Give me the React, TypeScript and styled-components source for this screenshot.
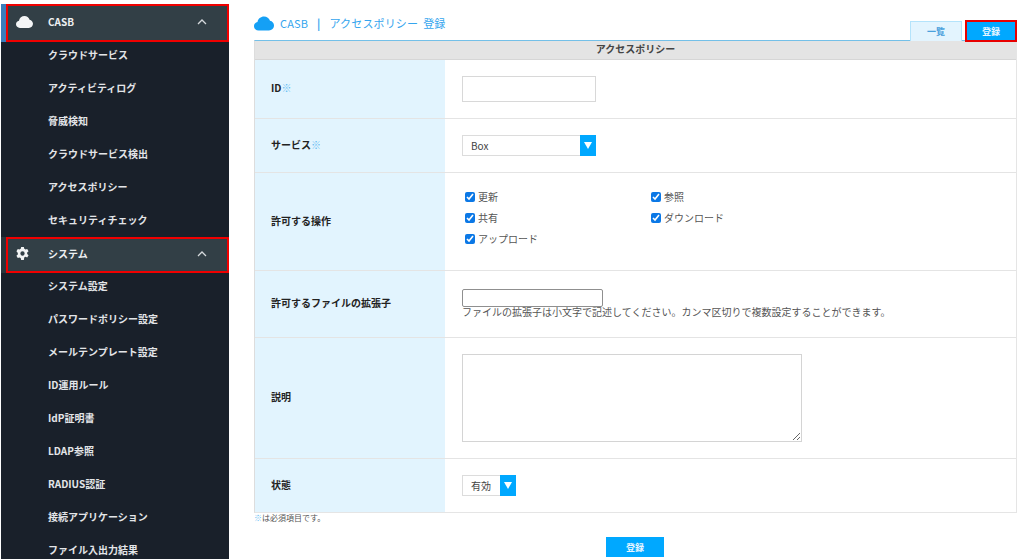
import styled, { createGlobalStyle } from 'styled-components'

const GlobalStyle = createGlobalStyle`
  html, body { margin: 0; padding: 0; background: #fff; height: 559px; overflow: hidden; }
  body { font-family: "Noto Sans CJK JP", "Noto Sans", sans-serif; font-size: 10px; color: #444; }
`

const Page = styled.div`
  display: flex;
  width: 1024px;
  height: 559px;
  overflow: hidden;
`

const Sidebar = styled.nav`
  width: 228px;
  margin: 4px 0 0 1px;
  flex-shrink: 0;
  background: #19202a;
  overflow: hidden;
`

// the red outline sits over the top few px of the next menu row
const MenuHeader = styled.div<{ $first?: boolean }>`
  display: flex;
  align-items: center;
  position: relative;
  z-index: 1;
  height: ${({ $first }) => ($first ? '38px' : '36px')};
  box-sizing: border-box;
  margin: ${({ $first }) => ($first ? '0 0 -3.500px 5px' : '0.500px 0 -3px 5px')};
  padding: 0 0 3px 8px;
  background: #323f46;
  border: 2px solid #f00000;
  color: #eef0f2;
  font-size: 10px;
  font-weight: 700;
  box-shadow: -5px 0 0 ${({ $first }) => ($first ? '#3a7dbb' : '#2a353c')};
`

const MenuIcon = styled.span`
  width: 32px;
  display: flex;
  align-items: center;
`

const MenuTitle = styled.span`
  flex: 1;
`

const Chevron = styled.svg`
  width: 10px;
  height: 6px;
  margin-right: 20px;
`

const MenuItem = styled.div`
  height: 33px;
  box-sizing: border-box;
  display: flex;
  align-items: center;
  padding: 0 0 2px 47px;
  color: #e3e5e8;
  font-size: 10px;
  font-weight: 700;
`

const Main = styled.main`
  flex: 1;
  padding: 0 7px 0 25px;
  min-width: 0;
`

const TopBar = styled.div`
  height: 41px;
  display: flex;
  align-items: flex-start;
  justify-content: space-between;
`

const PageTitle = styled.h1`
  margin: 14px 0 0;
  display: flex;
  align-items: center;
  gap: 6px;
  font-size: 11px;
  line-height: 18px;
  font-weight: 400;
  letter-spacing: 0.15px;
  color: #35a5ee;
`

const TitleBar = styled.span`
  margin: 0 9px;
  font-weight: 700;
`

const TitleAction = styled.span`
  margin-left: 5px;
`

const TopActions = styled.div`
  display: flex;
  align-items: flex-start;
  gap: 3px;
  margin-top: 20px;
  position: relative;
  z-index: 1;
`

const ListButton = styled.button`
  width: 52px;
  height: 20px;
  margin-top: 1px;
  box-sizing: border-box;
  border: 1.500px solid #b4e3fb;
  border-bottom: none;
  background: #e3f4fe;
  color: #4aa0dc;
  font: 700 9px "Noto Sans CJK JP", sans-serif;
  padding: 0;
`

const PrimaryButton = styled.button<{ $outlined?: boolean }>`
  width: ${({ $outlined }) => ($outlined ? '52px' : '58px')};
  height: ${({ $outlined }) => ($outlined ? '22px' : '20px')};
  box-sizing: border-box;
  border: ${({ $outlined }) => ($outlined ? '2px solid #e80000' : 'none')};
  background: #00a8ff;
  color: #e8f6ff;
  font: 700 9px "Noto Sans CJK JP", sans-serif;
  padding: 0;
`

const Form = styled.section`
  border-top: 1px solid #74c0e8;
  border-left: 1px solid #ddd;
  border-right: 1px solid #e5e5e5;
  border-bottom: 1px solid #e5e5e5;
  margin-top: -1px;
`

const FormTitle = styled.div`
  height: 19px;
  background: #e4e4e4;
  border-bottom: 1px solid #d6d6d6;
  box-sizing: border-box;
  text-align: center;
  font-size: 10px;
  line-height: 16px;
  font-weight: 700;
  color: #444;
`

const Row = styled.div<{ $height: number }>`
  display: flex;
  height: ${({ $height }) => $height}px;
  box-sizing: border-box;
  border-bottom: 1px solid #e4e4e4;

  &:last-child {
    border-bottom: none;
  }
`

const Label = styled.div`
  width: 190px;
  flex-shrink: 0;
  background: #e2f4fe;
  display: flex;
  align-items: center;
  padding: 0 0 3px 16px;
  box-sizing: border-box;
  font-size: 10px;
  font-weight: 700;
  color: #222;
`

const Required = styled.span`
  color: #62bcf3;
  font-weight: 700;
`

const Field = styled.div`
  flex: 1;
  padding-left: 17px;
  display: flex;
  flex-direction: column;
  justify-content: center;
  align-items: flex-start;
`

const TextBox = styled.input`
  width: 134px;
  height: 26px;
  box-sizing: border-box;
  border: 1px solid #d8d8d8;
  background: #fff;
  padding: 0;
  outline: none;
`

const SelectBox = styled.div<{ $width: number }>`
  width: ${({ $width }) => $width}px;
  height: 21px;
  box-sizing: border-box;
  border: 1px solid #dcdcdc;
  display: flex;
  align-items: center;
  justify-content: space-between;
  padding-left: 8px;
  font-size: 10px;
  color: #444;
`

const SelectArrow = styled.span`
  width: 16px;
  height: 21px;
  margin: 0 -1px 0 0;
  background: #00a8ff;
  display: flex;
  align-items: center;
  justify-content: center;
`

const CheckGrid = styled.div`
  display: grid;
  grid-template-columns: 186px 186px;
  grid-auto-rows: 21px;
  margin: -8px 0 0 3px;
`

const CheckItem = styled.label`
  display: flex;
  align-items: center;
  gap: 3px;
  font-size: 10px;
  color: #555;
`

const CheckBox = styled.input`
  width: 10px;
  height: 10px;
  margin: 0;
  accent-color: #0b78e6;
`

const ExtensionInput = styled.input`
  width: 141px;
  height: 18px;
  box-sizing: border-box;
  border: 1px solid #8f8f8f;
  border-radius: 2px;
  padding: 0;
  background: #fff;
  outline: none;
`

const Hint = styled.div`
  font-size: 10px;
  line-height: 14px;
  margin-top: -2px;
  color: #555;
`

const DescriptionArea = styled.textarea`
  width: 340px;
  height: 88px;
  box-sizing: border-box;
  border: 1px solid #d4d4d4;
  padding: 0;
  outline: none;
  font: inherit;
`

const Note = styled.div`
  font-size: 8px;
  line-height: 12px;
  margin-top: -1px;
  color: #555;
`

const Footer = styled.div`
  display: flex;
  justify-content: center;
  margin-top: 13px;
  padding-right: 1px;
`

const sections = {
  casb: ['クラウドサービス', 'アクティビティログ', '脅威検知', 'クラウドサービス検出', 'アクセスポリシー', 'セキュリティチェック'],
  system: [
    'システム設定',
    'パスワードポリシー設定',
    'メールテンプレート設定',
    'ID運用ルール',
    'IdP証明書',
    'LDAP参照',
    'RADIUS認証',
    '接続アプリケーション',
    'ファイル入出力結果',
  ],
}

const operations = ['更新', '参照', '共有', 'ダウンロード', 'アップロード']

function CloudIcon({ color, width, height }: { color: string; width: number; height: number }) {
  return (
    <svg width={width} height={height} viewBox="0 0 20 14">
      <path
        fill={color}
        d="M4.600 14C2 14 0 12.100 0 9.700 0 7.600 1.400 5.900 3.500 5.500 4 2.300 6.800 0 10 0c2.800 0 5.200 1.700 6 4.300 2.300.4 4 2.400 4 4.800 0 2.700-2.200 4.900-5 4.900H4.600z"
      />
    </svg>
  )
}

function GearIcon() {
  return (
    <svg width="13" height="13" viewBox="0 0 24 24">
      <path
        fill="#f2f3f4"
        fillRule="evenodd"
        d="M9.500 0h5l.7 3.400c.8.300 1.500.7 2.200 1.200l3.300-1.100 2.500 4.300-2.600 2.300c.1.900.1 1.700 0 2.600l2.600 2.300-2.500 4.300-3.300-1.100c-.7.500-1.400.9-2.200 1.200L14.500 24h-5l-.7-3.400c-.8-.3-1.500-.7-2.200-1.200l-3.300 1.100-2.500-4.300 2.600-2.300c-.1-.9-.1-1.700 0-2.600L.8 7.800l2.500-4.300 3.300 1.100c.7-.5 1.400-.9 2.200-1.200L9.500 0zM12 8a4 4 0 1 0 0 8 4 4 0 0 0 0-8z"
      />
    </svg>
  )
}

function UpChevron() {
  return (
    <Chevron viewBox="0 0 10 6">
      <path d="M1 5l4-4 4 4" fill="none" stroke="#d5d9dc" strokeWidth="1.300" />
    </Chevron>
  )
}

function Arrow() {
  return (
    <svg width="8" height="7" viewBox="0 0 8 7">
      <path d="M0 0h8L4 7z" fill="#fff" />
    </svg>
  )
}

export default function App() {
  return (
    <Page>
      <GlobalStyle />
      <Sidebar>
        <MenuHeader $first>
          <MenuIcon>
            <CloudIcon color="#f4f5f6" width={17} height={12} />
          </MenuIcon>
          <MenuTitle>CASB</MenuTitle>
          <UpChevron />
        </MenuHeader>
        {sections.casb.map((name) => (
          <MenuItem key={name}>{name}</MenuItem>
        ))}
        <MenuHeader>
          <MenuIcon>
            <GearIcon />
          </MenuIcon>
          <MenuTitle>システム</MenuTitle>
          <UpChevron />
        </MenuHeader>
        {sections.system.map((name) => (
          <MenuItem key={name}>{name}</MenuItem>
        ))}
      </Sidebar>
      <Main>
        <TopBar>
          <PageTitle>
            <CloudIcon color="#14a0f5" width={20} height={15} />
            <span>
              CASB<TitleBar>|</TitleBar>アクセスポリシー<TitleAction>登録</TitleAction>
            </span>
          </PageTitle>
          <TopActions>
            <ListButton>一覧</ListButton>
            <PrimaryButton $outlined>登録</PrimaryButton>
          </TopActions>
        </TopBar>
        <Form>
          <FormTitle>アクセスポリシー</FormTitle>
          <Row $height={59}>
            <Label>
              ID<Required>※</Required>
            </Label>
            <Field>
              <TextBox />
            </Field>
          </Row>
          <Row $height={54}>
            <Label>
              サービス<Required>※</Required>
            </Label>
            <Field>
              <SelectBox $width={134}>
                Box
                <SelectArrow>
                  <Arrow />
                </SelectArrow>
              </SelectBox>
            </Field>
          </Row>
          <Row $height={98}>
            <Label>許可する操作</Label>
            <Field>
              <CheckGrid>
                {operations.map((op) => (
                  <CheckItem key={op}>
                    <CheckBox type="checkbox" defaultChecked />
                    {op}
                  </CheckItem>
                ))}
              </CheckGrid>
            </Field>
          </Row>
          <Row $height={67}>
            <Label>許可するファイルの拡張子</Label>
            <Field>
              <ExtensionInput />
              <Hint>ファイルの拡張子は小文字で記述してください。カンマ区切りで複数設定することができます。</Hint>
            </Field>
          </Row>
          <Row $height={121}>
            <Label>説明</Label>
            <Field>
              <DescriptionArea />
            </Field>
          </Row>
          <Row $height={53}>
            <Label>状態</Label>
            <Field>
              <SelectBox $width={54}>
                有効
                <SelectArrow>
                  <Arrow />
                </SelectArrow>
              </SelectBox>
            </Field>
          </Row>
        </Form>
        <Note>
          <Required>※</Required>は必須項目です。
        </Note>
        <Footer>
          <PrimaryButton>登録</PrimaryButton>
        </Footer>
      </Main>
    </Page>
  )
}
